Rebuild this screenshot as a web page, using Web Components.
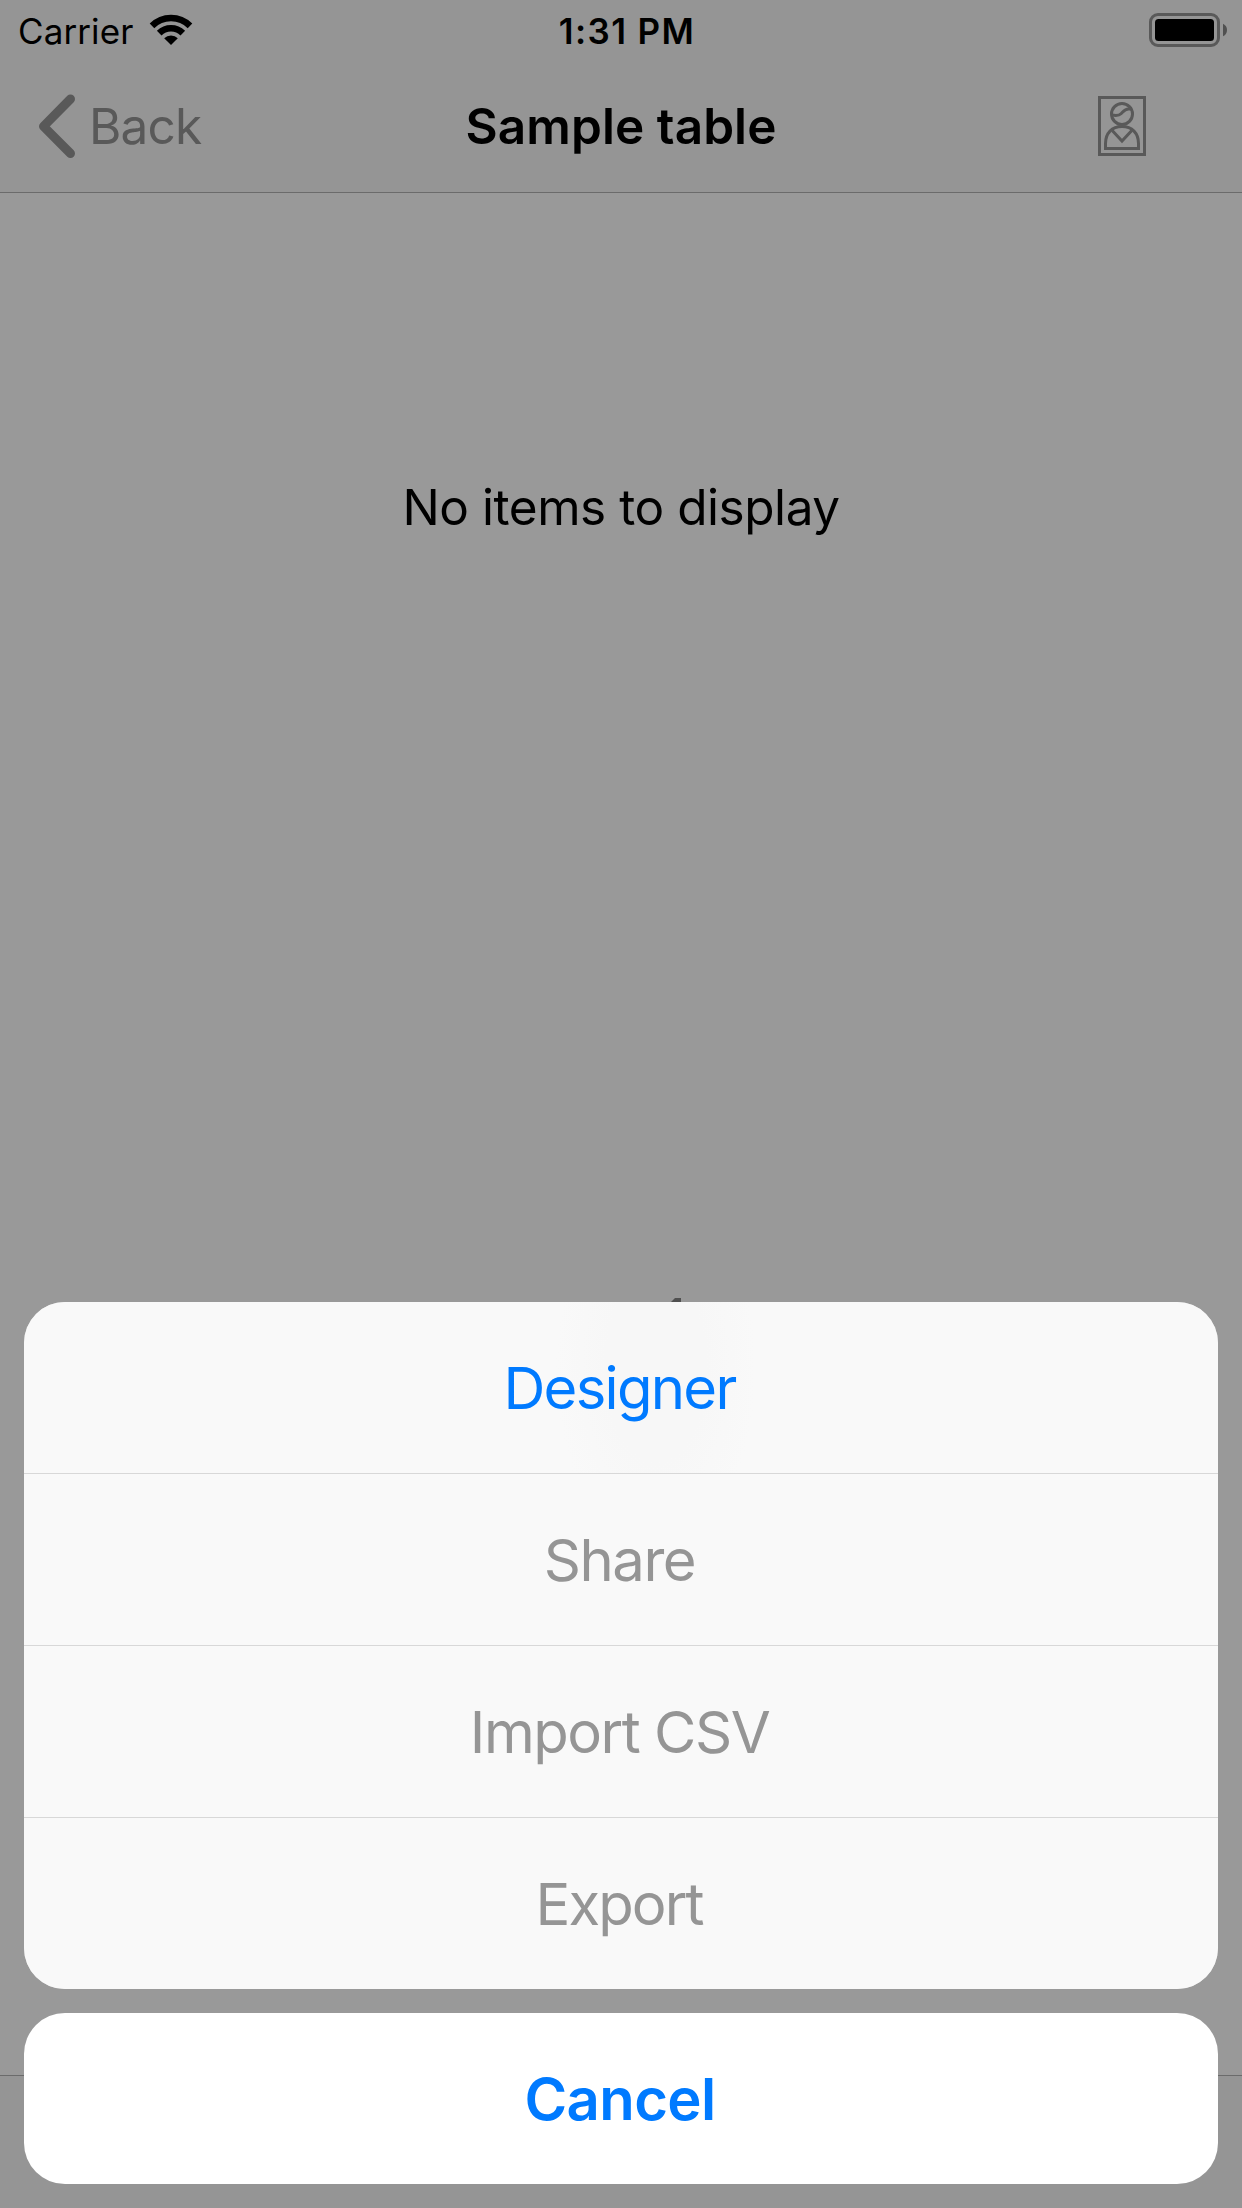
<!DOCTYPE html>
<html lang="en">
<head>
<meta charset="utf-8">
<title>Sample table</title>
<style>
html,body{margin:0;width:1242px;height:2208px;overflow:hidden;background:#999;font-family:Inter,"Liberation Sans",sans-serif;color:#000}
</style>
</head>
<body>
<phone-screen>
  <status-bar></status-bar>
  <nav-bar><span slot="back">Back</span>Sample table</nav-bar>
  <empty-list>No items to display</empty-list>
  <tool-bar></tool-bar>
  <action-sheet slot="overlay">
    <sheet-action tint style="--spacing:-1.7px;--trim:3px">Designer</sheet-action>
    <sheet-action style="--spacing:-1.5px;--trim:3px">Share</sheet-action>
    <sheet-action style="--spacing:-1.5px;--trim:3px">Import CSV</sheet-action>
    <sheet-action style="--spacing:-1.9px;--trim:4px">Export</sheet-action>
    <sheet-action slot="cancel" tint strong style="--spacing:-.6px;--trim:2px">Cancel</sheet-action>
  </action-sheet>
</phone-screen>
<script>
function define(name, html) {
  const template = document.createElement('template');
  template.innerHTML = html;
  customElements.define(name, class extends HTMLElement {
    constructor() {
      super();
      this.attachShadow({ mode: 'open' }).append(template.content.cloneNode(true));
    }
  });
}

define('phone-screen', `
<style>
:host{display:flex;flex-direction:column;position:relative;width:1242px;height:2208px;overflow:hidden;background:#999}
::slotted(empty-list){flex:1}
::slotted(action-sheet){position:absolute;left:24px;right:24px;bottom:24px}
</style>
<slot></slot><slot name="overlay"></slot>`);

define('status-bar', `
<style>
:host{display:grid;grid-template-columns:1fr auto 1fr;height:60px;background:#959595;font-size:35px;line-height:62px;white-space:nowrap}
.network{display:flex;gap:15.6px;padding-left:18px;letter-spacing:.1px}
.network svg{margin-top:13px}
.time{padding-left:12px;font-weight:600;letter-spacing:1.4px}
.power{display:flex;justify-content:flex-end;padding:12px 14px 0 0}
svg{display:block}
</style>
<div class="network"><span>Carrier</span>
<svg width="44" height="34" viewBox="0 0 44 34"><g fill="none" stroke="#000" stroke-width="6.5"><path d="M3 12.900a26.900 26.900 0 0 1 38 0"/><path d="M10.200 20.100a16.700 16.700 0 0 1 23.600 0"/></g><path d="M22 32l-6.800-6.800a9.600 9.600 0 0 1 13.600 0z"/></svg>
</div>
<div class="time">1:31 PM</div>
<div class="power"><svg width="80" height="36" viewBox="0 0 80 36"><rect x="2.500" y="2.500" width="68" height="31" rx="7.500" fill="none" stroke="#595959" stroke-width="3"/><rect x="7" y="7" width="59" height="22" rx="3.500"/><path d="M75 11.700q4 2 4 6.300t-4 6.300z" fill="#505050"/></svg></div>`);

define('nav-bar', `
<style>
:host{display:grid;grid-template-columns:1fr auto 1fr;height:132px;background:#959595;border-bottom:1px solid #6b6b6b;font-size:49.5px;line-height:132px;white-space:nowrap}
.back{display:flex;align-items:center;gap:12px;padding-left:37px;color:#595959;letter-spacing:-.8px}
.title{font-weight:600;letter-spacing:.08px}
.item{display:flex;justify-content:flex-end;padding:36px 95px 0 0}
svg{display:block}
</style>
<div class="back"><svg width="40" height="66" viewBox="0 0 40 66" fill="none" stroke="#595959" stroke-width="9" stroke-linecap="round" stroke-linejoin="round"><path d="M33.500 6l-27 27.300 27 27.200"/></svg><slot name="back"></slot></div>
<div class="title"><slot></slot></div>
<div class="item"><svg width="49" height="60" viewBox="0 0 49 60" fill="none" stroke="#595959" stroke-width="3"><rect x="1.500" y="1.500" width="45" height="57"/><circle cx="24" cy="18" r="10.500"/><path d="M13.800 19c4 .7 7.500.5 9.200-1.200 2.500-2.500 4-4.800 7.500-4.900h3"/><path d="M7.500 52.500V47.500c0-10.400 6.500-17 16.500-17s16.500 6.600 16.500 17v5z"/><path d="M14.200 34.500L24 45l9.800-10.500"/></svg></div>`);

define('empty-list', `
<style>
:host{display:flex;flex-direction:column;align-items:center;box-sizing:border-box;padding-top:279px;font-size:49.5px;line-height:70px;letter-spacing:-.45px}
.mark{display:block;margin:756px 0 0 110px}
</style>
<slot></slot><svg class="mark" width="10" height="4" viewBox="0 0 10 4"><path d="M0 4L4 0H10V4z" fill="#505050"/></svg>`);

define('tool-bar', `
<style>:host{display:block;height:132px;background:#959595;border-top:1px solid #6b6b6b}</style>`);

define('action-sheet', `
<style>
:host{display:flex;flex-direction:column;gap:24px}
.group,.cancel{border-radius:41px;overflow:hidden}
.group{display:flex;flex-direction:column;gap:1px;background:#d8d8d8}
.group ::slotted(*){background:#f9f9f9}
.group ::slotted(:first-child){background:radial-gradient(ellipse 100px 190px at 632px 65px,#f7f7f7 0 50%,#f9f9f9 100%)}
.cancel{background:#fff}
</style>
<div class="group"><slot></slot></div><div class="cancel"><slot name="cancel"></slot></div>`);

define('sheet-action', `
<style>
:host{display:flex;justify-content:center;box-sizing:border-box;height:171px;padding-right:var(--trim);font-size:58px;line-height:173px;letter-spacing:var(--spacing);color:#959595;white-space:nowrap}
:host([tint]){color:#007aff}
:host([strong]){font-weight:600}
</style>
<slot></slot>`);
</script>
</body>
</html>
